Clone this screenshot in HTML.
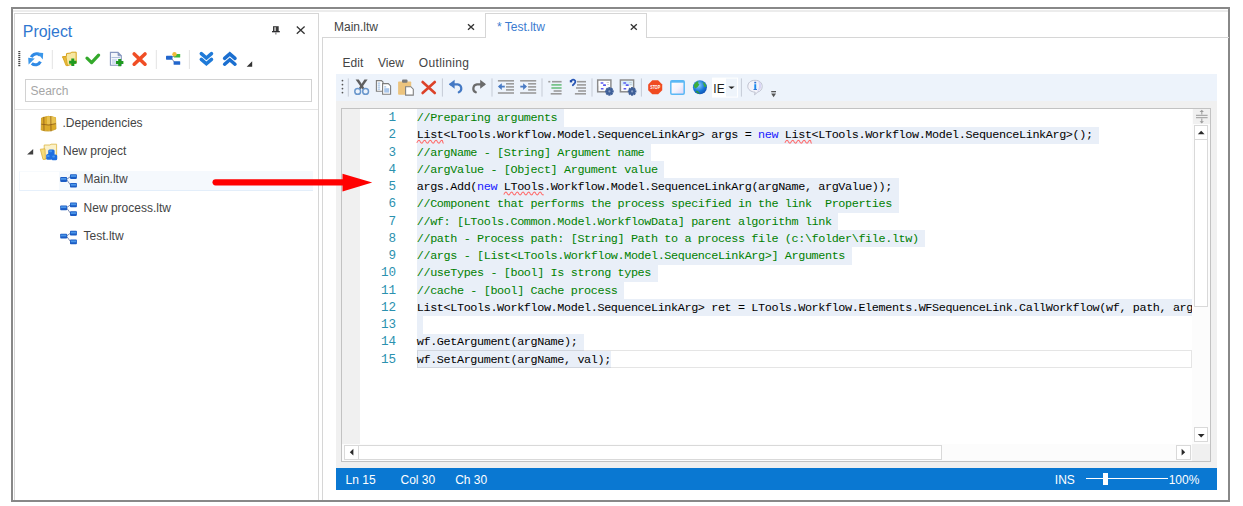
<!DOCTYPE html>
<html><head><meta charset="utf-8">
<style>
*{margin:0;padding:0;box-sizing:border-box}
html,body{width:1243px;height:506px;overflow:hidden;background:#fff;font-family:"Liberation Sans",sans-serif}
.a{position:absolute}
.t{position:absolute;white-space:pre;line-height:1}
svg{position:absolute;overflow:visible}
.code{position:absolute;left:0;top:0;font-family:"Liberation Mono",monospace;font-size:11.8px;line-height:17.25px;letter-spacing:-0.388px}
.ln{position:absolute;left:356px;width:40px;text-align:right;color:#2b91af;white-space:pre;font-size:12.6px;letter-spacing:0}
.cl{position:absolute;left:416.8px;white-space:pre;color:#000}
.cm{color:#008000}
.kw{color:#1a1aff}
</style></head><body>
<div class="a" style="left:11px;top:7px;width:1219px;height:495px;background:transparent;border:2px solid #888888"></div>
<div class="a" style="left:13px;top:10px;width:1215px;height:2px;background:#ececec;"></div>
<div class="a" style="left:14px;top:13px;width:305px;height:487px;background:transparent;border:1px solid #d6d6d6;border-bottom:none"></div>
<div class="a" style="left:322px;top:37px;width:907px;height:463px;background:transparent;border-left:1px solid #d6d6d6;border-top:1px solid #d6d6d6"></div>
<div class="t" style="left:22.80px;top:23.84px;font-size:15.9px;color:#2f77d0;">Project</div>
<div class="a" style="left:25px;top:79px;width:287px;height:23px;background:#fff;border:1px solid #d2d2d2"></div>
<div class="t" style="left:30.50px;top:85.14px;font-size:12px;color:#a6a6a6;">Search</div>
<div class="a" style="left:15px;top:109px;width:303px;height:1px;background:#e6e6e6;"></div>
<div class="a" style="left:19px;top:171px;width:294px;height:20px;background:transparent;border-left:1px solid #f1f6fc;border-bottom:1px solid #e6f0fb;border-top:1px solid #f7fafd"></div>
<div class="a" style="left:59px;top:171px;width:254px;height:20px;background:#f5f9fd;border-bottom:1px solid #e3eefa"></div>
<div class="t" style="left:62.50px;top:117.14px;font-size:12px;color:#444444;">.Dependencies</div>
<div class="t" style="left:63.00px;top:145.24px;font-size:12px;color:#444444;">New project</div>
<div class="t" style="left:83.60px;top:173.34px;font-size:12px;color:#444444;">Main.ltw</div>
<div class="t" style="left:83.60px;top:201.54px;font-size:12px;color:#444444;">New process.ltw</div>
<div class="t" style="left:83.60px;top:229.94px;font-size:12px;color:#444444;">Test.ltw</div>
<div class="a" style="left:485px;top:13px;width:162px;height:25px;background:#fff;border:1px solid #d6d6d6;border-bottom:none"></div>
<div class="t" style="left:334.00px;top:20.74px;font-size:12px;color:#444444;">Main.ltw</div>
<div class="t" style="left:497.00px;top:20.74px;font-size:12px;color:#3a7bd0;">* Test.ltw</div>
<div class="t" style="left:342.60px;top:56.74px;font-size:12px;color:#444444;">Edit</div>
<div class="t" style="left:378.00px;top:56.74px;font-size:12px;color:#444444;">View</div>
<div class="t" style="left:418.80px;top:56.74px;font-size:12px;color:#444444;letter-spacing:0.35px">Outlining</div>
<div class="a" style="left:336px;top:74px;width:881px;height:28px;background:#edf3fb;"></div>
<div class="a" style="left:336px;top:101px;width:881px;height:367px;background:#f0f0f0;"></div>
<div class="a" style="left:341px;top:108px;width:870px;height:354px;background:#fff;border:1px solid #c2c2c2"></div>
<div class="a" style="left:342px;top:109px;width:18px;height:335px;background:#f0f0f0;"></div>
<div class="a" style="left:342px;top:109px;width:850px;height:335px;overflow:hidden">
<div class="code" style="left:-342px;top:-109px">
<div class="a" style="left:416.8px;top:109.40px;width:147.25px;height:17.25px;background:#e9eff8"></div>
<div class="a" style="left:416.8px;top:126.65px;width:682.69px;height:17.25px;background:#e9eff8"></div>
<div class="a" style="left:416.8px;top:143.90px;width:234.25px;height:17.25px;background:#e9eff8"></div>
<div class="a" style="left:416.8px;top:161.15px;width:247.64px;height:17.25px;background:#e9eff8"></div>
<div class="a" style="left:416.8px;top:178.40px;width:481.90px;height:17.25px;background:#e9eff8"></div>
<div class="a" style="left:416.8px;top:195.65px;width:481.90px;height:17.25px;background:#e9eff8"></div>
<div class="a" style="left:416.8px;top:212.90px;width:421.66px;height:17.25px;background:#e9eff8"></div>
<div class="a" style="left:416.8px;top:230.15px;width:508.67px;height:17.25px;background:#e9eff8"></div>
<div class="a" style="left:416.8px;top:247.40px;width:435.04px;height:17.25px;background:#e9eff8"></div>
<div class="a" style="left:416.8px;top:264.65px;width:240.95px;height:17.25px;background:#e9eff8"></div>
<div class="a" style="left:416.8px;top:281.90px;width:207.48px;height:17.25px;background:#e9eff8"></div>
<div class="a" style="left:416.8px;top:299.15px;width:803.16px;height:17.25px;background:#e9eff8"></div>
<div class="a" style="left:416.8px;top:316.40px;width:6.69px;height:17.25px;background:#e9eff8"></div>
<div class="a" style="left:416.8px;top:333.65px;width:167.32px;height:17.25px;background:#e9eff8"></div>
<div class="a" style="left:416.8px;top:350.90px;width:194.10px;height:17.25px;background:#e9eff8"></div>
<div class="a" style="left:416.8px;top:350.40px;width:775.20px;height:17.25px;border:1px solid rgba(0,0,0,0.1)"></div>
<div class="ln" style="top:110.20px">1</div>
<div class="cl" style="top:110.20px"><span class="cm">//Preparing arguments</span></div>
<div class="ln" style="top:127.45px">2</div>
<div class="cl" style="top:127.45px">List&lt;LTools.Workflow.Model.SequenceLinkArg&gt; args = <span class="kw">new</span> List&lt;LTools.Workflow.Model.SequenceLinkArg&gt;();</div>
<div class="ln" style="top:144.70px">3</div>
<div class="cl" style="top:144.70px"><span class="cm">//argName - [String] Argument name</span></div>
<div class="ln" style="top:161.95px">4</div>
<div class="cl" style="top:161.95px"><span class="cm">//argValue - [Object] Argument value</span></div>
<div class="ln" style="top:179.20px">5</div>
<div class="cl" style="top:179.20px">args.Add(<span class="kw">new</span> LTools.Workflow.Model.SequenceLinkArg(argName, argValue));</div>
<div class="ln" style="top:196.45px">6</div>
<div class="cl" style="top:196.45px"><span class="cm">//Component that performs the process specified in the link  Properties</span></div>
<div class="ln" style="top:213.70px">7</div>
<div class="cl" style="top:213.70px"><span class="cm">//wf: [LTools.Common.Model.WorkflowData] parent algorithm link</span></div>
<div class="ln" style="top:230.95px">8</div>
<div class="cl" style="top:230.95px"><span class="cm">//path - Process path: [String] Path to a process file (c:\folder\file.ltw)</span></div>
<div class="ln" style="top:248.20px">9</div>
<div class="cl" style="top:248.20px"><span class="cm">//args - [List&lt;LTools.Workflow.Model.SequenceLinkArg&gt;] Arguments</span></div>
<div class="ln" style="top:265.45px">10</div>
<div class="cl" style="top:265.45px"><span class="cm">//useTypes - [bool] Is strong types</span></div>
<div class="ln" style="top:282.70px">11</div>
<div class="cl" style="top:282.70px"><span class="cm">//cache - [bool] Cache process</span></div>
<div class="ln" style="top:299.95px">12</div>
<div class="cl" style="top:299.95px">List&lt;LTools.Workflow.Model.SequenceLinkArg&gt; ret = LTools.Workflow.Elements.WFSequenceLink.CallWorkflow(wf, path, args);</div>
<div class="ln" style="top:317.20px">13</div>
<div class="cl" style="top:317.20px"></div>
<div class="ln" style="top:334.45px">14</div>
<div class="cl" style="top:334.45px">wf.GetArgument(argName);</div>
<div class="ln" style="top:351.70px">15</div>
<div class="cl" style="top:351.70px">wf.SetArgument(argName, val);</div>
<svg style="left:0;top:0" width="1243" height="506"><path d="M416.80,142.85 Q418.23,139.65 419.65,140.65 Q421.08,143.85 422.50,142.85 Q423.93,139.65 425.35,140.65 Q426.78,143.85 428.20,142.85 Q429.63,139.65 431.05,140.65 Q432.48,143.85 433.90,142.85 Q435.33,139.65 436.75,140.65 Q438.18,143.85 439.60,142.85 Q441.03,139.65 442.45,140.65 Q443.01,143.85 443.57,142.85" fill="none" stroke="#ff6a6a" stroke-width="1.05"/><path d="M784.91,142.85 Q786.34,139.65 787.76,140.65 Q789.19,143.85 790.62,142.85 Q792.04,139.65 793.47,140.65 Q794.89,143.85 796.32,142.85 Q797.74,139.65 799.17,140.65 Q800.59,143.85 802.02,142.85 Q803.44,139.65 804.87,140.65 Q806.29,143.85 807.72,142.85 Q809.14,139.65 810.57,140.65 Q811.13,143.85 811.69,142.85" fill="none" stroke="#ff6a6a" stroke-width="1.05"/><path d="M503.81,194.60 Q505.23,191.40 506.66,192.40 Q508.08,195.60 509.51,194.60 Q510.93,191.40 512.36,192.40 Q513.78,195.60 515.21,194.60 Q516.63,191.40 518.06,192.40 Q519.48,195.60 520.91,194.60 Q522.33,191.40 523.76,192.40 Q525.18,195.60 526.61,194.60 Q528.03,191.40 529.46,192.40 Q530.88,195.60 532.31,194.60 Q533.73,191.40 535.16,192.40 Q536.58,195.60 538.01,194.60 Q539.43,191.40 540.86,192.40 Q542.28,195.60 543.71,194.60" fill="none" stroke="#ff6a6a" stroke-width="1.05"/></svg>
</div></div>
<div class="a" style="left:1192px;top:109px;width:18px;height:335px;background:#fcfcfc;"></div>
<div class="a" style="left:1193px;top:109px;width:17px;height:15px;background:#f0f0f0;"></div>
<div class="a" style="left:1194px;top:125px;width:14px;height:14.5px;background:#fff;border:1px solid #d9d9d9"></div>
<div class="a" style="left:1194px;top:139px;width:14px;height:168px;background:#fff;border:1px solid #d9d9d9"></div>
<div class="a" style="left:1194px;top:427px;width:14px;height:15px;background:#fff;border:1px solid #d9d9d9"></div>
<div class="a" style="left:342px;top:444px;width:850px;height:17px;background:#fcfcfc;"></div>
<div class="a" style="left:344px;top:445px;width:14.5px;height:14.5px;background:#fff;border:1px solid #d9d9d9"></div>
<div class="a" style="left:358px;top:445px;width:584px;height:14.5px;background:#fff;border:1px solid #d9d9d9"></div>
<div class="a" style="left:1176px;top:445px;width:15.2px;height:14.5px;background:#fff;border:1px solid #d9d9d9"></div>
<div class="a" style="left:1192px;top:444px;width:18px;height:17px;background:#f0f0f0;"></div>
<svg style="left:0;top:0" width="1243" height="506"><polygon points="1197.8,134.2 1204.6,134.2 1201.2,130.8" fill="#2a2a2a"/><polygon points="1197.8,434 1204.6,434 1201.2,437.4" fill="#2a2a2a"/><polygon points="353.4,448.8 353.4,455.6 349.8,452.2" fill="#2a2a2a"/><polygon points="1181.6,448.8 1181.6,455.6 1185.2,452.2" fill="#2a2a2a"/><g fill="#9a9a9a"><rect x="1196" y="114.8" width="11.6" height="1"/><rect x="1196" y="117.2" width="11.6" height="1"/><rect x="1201.3" y="111" width="1" height="3.5"/><rect x="1201.3" y="118.5" width="1" height="3.5"/><polygon points="1199.6,112 1203.9,112 1201.8,109.8"/><polygon points="1199.6,121.2 1203.9,121.2 1201.8,123.4"/></g></svg>
<div class="a" style="left:336px;top:468px;width:881px;height:22px;background:#0a78d2;"></div>
<div class="t" style="left:345.60px;top:474.14px;font-size:12px;color:#fff;">Ln 15</div>
<div class="t" style="left:400.50px;top:474.14px;font-size:12px;color:#fff;">Col 30</div>
<div class="t" style="left:455.20px;top:474.14px;font-size:12px;color:#fff;">Ch 30</div>
<div class="t" style="left:1054.80px;top:474.14px;font-size:12px;color:#fff;">INS</div>
<div class="t" style="left:1168.70px;top:474.14px;font-size:12px;color:#fff;">100%</div>
<div class="a" style="left:1086px;top:478px;width:82px;height:1px;background:#fff;"></div>
<div class="a" style="left:1103px;top:473px;width:5px;height:12px;background:#fff;"></div>
<svg style="left:0;top:0" width="1243" height="506"><g fill="#2d2d30"><rect x="273" y="26.2" width="5.7" height="5" fill="#3a3a3a"/><rect x="274.2" y="27.2" width="1.8" height="4" fill="#b8b8b8"/><rect x="272" y="31" width="7.8" height="1.3"/><rect x="275.2" y="32.3" width="1.3" height="2.2" fill="#888"/></g><path d="M296.8,26.5 L304.6,33.8 M304.6,26.5 L296.8,33.8" stroke="#333" stroke-width="1.3"/><g fill="#444"><rect x="18.3" y="51.0" width="2" height="1.2"/><rect x="18.3" y="53.0" width="2" height="1.2"/><rect x="18.3" y="55.0" width="2" height="1.2"/><rect x="18.3" y="57.0" width="2" height="1.2"/><rect x="18.3" y="59.0" width="2" height="1.2"/><rect x="18.3" y="61.0" width="2" height="1.2"/><rect x="18.3" y="63.0" width="2" height="1.2"/><rect x="18.3" y="65.0" width="2" height="1.2"/></g><g fill="none" stroke="#2f8ae6" stroke-width="3"><path d="M31.4,57.2 A5.4,5.4 0 0 1 40.2,55.4"/><path d="M40.4,61.6 A5.4,5.4 0 0 1 31.8,63.4"/></g><polygon points="37,52.6 43.2,53 42.8,59.6" fill="#3b97ea"/><polygon points="28.2,57.8 34.8,58.4 28.6,64.6" fill="#3b97ea"/><rect x="51.8" y="50" width="1" height="19" fill="#e3e3e3"/><rect x="155.8" y="50" width="1" height="19" fill="#e3e3e3"/><rect x="188.9" y="50" width="1" height="19" fill="#e3e3e3"/><path d="M62.6,56.8 L66.3,56.5 L66.6,53.5 L71,53 L71.5,52.2 L76.2,52.2 L76.2,63 L67.5,65.6 Z" fill="#f7e7a0" stroke="#d6a21c" stroke-width="1"/><path d="M62.6,56.8 L66,56.6 L67.5,65.6 L66,65.6 Z" fill="#e8b93a" stroke="#d6a21c" stroke-width="0.8"/><path d="M72.8,58.6 V66 M69.1,62.3 H76.5" stroke="#1f9a1f" stroke-width="3"/><path d="M87,58.2 L91.6,62.6 L98.6,55.2" fill="none" stroke="#33a92b" stroke-width="3.2" stroke-linecap="round" stroke-linejoin="round"/><path d="M110.4,52.4 H118 L121.3,55.7 V65.3 H110.4 Z" fill="#f3f6fb" stroke="#8797bf" stroke-width="1.1"/><path d="M118,52.4 V55.7 H121.3" fill="#8797bf" stroke="#8797bf" stroke-width="0.8"/><rect x="111.5" y="57" width="8.5" height="0.8" fill="#9fb3d6"/><rect x="112" y="59" width="5" height="5" fill="#d3def0"/><path d="M119.7,58.9 V66.3 M116,62.6 H123.4" stroke="#1f9a1f" stroke-width="3"/><path d="M134.2,54 L145,64.2 M145,54 L134.2,64.2" stroke="#f04e25" stroke-width="3.6" stroke-linecap="round"/><line x1="171" y1="57.7" x2="175" y2="55.6" stroke="#7a8ab0" stroke-width="1"/><line x1="171" y1="57.7" x2="175" y2="63" stroke="#7a8ab0" stroke-width="1"/><rect x="166" y="55.7" width="6.4" height="4" rx="0.6" fill="#2266cc"/><rect x="173.8" y="54" width="6.4" height="3.6" rx="0.6" fill="#3cb83c"/><rect x="173.6" y="61.2" width="6.6" height="3.6" rx="0.6" fill="#2266cc"/><circle cx="174.5" cy="54.3" r="2.2" fill="#f0b93a"/><path d="M201.3,53.6 L206.4,58 L211.5,53.6 M201.3,59.4 L206.4,63.8 L211.5,59.4" fill="none" stroke="#1f7ad8" stroke-width="3.5" stroke-linecap="round" stroke-linejoin="miter"/><path d="M224.6,58.4 L229.8,53.9 L235,58.4 M224.6,64.2 L229.8,59.7 L235,64.2" fill="none" stroke="#1b6fd0" stroke-width="3.5" stroke-linecap="round" stroke-linejoin="miter"/><polygon points="252.2,61.2 252.2,66.7 246.7,66.7" fill="#333"/><path d="M41.5,118 Q48,114.8 55.5,117.6 L56,129 Q49,132.6 41.2,130 Z" fill="#dcab2a" stroke="#c99a1e" stroke-width="0.8"/><path d="M47,116.2 Q51.5,116 55.5,117.6 L55.8,123.5 Q51,124.8 47,124.4Z" fill="#e9c24e"/><path d="M43.8,116.8 L44,130.8 M41.3,124.2 Q49,126.2 55.9,123.6 M50.8,116.2 L51,131.4" stroke="#8a5a18" stroke-width="1" fill="none" opacity="0.75"/><polygon points="33.2,148.9 33.2,154.6 27.1,154.6" fill="#404040"/><path d="M44.2,145 L50,145 L51,144.2 L56.6,144.2 L56.6,158.6 L44.2,158.6 Z" fill="#fbf1c8" stroke="#e0bd55" stroke-width="0.9"/><path d="M40.3,149.2 L45,148.8 L45.4,159.4 L43,159.4 Z" fill="#f6dc78" stroke="#dcb040" stroke-width="0.8"/><g fill="#1f6fe0"><rect x="48.2" y="149.6" width="6.4" height="5.8" rx="1.5"/><rect x="46.2" y="154" width="5.8" height="5.8" rx="1.5"/><rect x="51.4" y="154.6" width="5.8" height="5.6" rx="1.5"/></g><g fill="#4fa0f5" opacity="0.8"><rect x="49" y="150.3" width="3" height="2" rx="0.8"/><rect x="47" y="155" width="2.6" height="2" rx="0.8"/><rect x="52.3" y="155.5" width="2.6" height="2" rx="0.8"/></g><g><line x1="66.5" y1="179.5" x2="70.5" y2="176.5" stroke="#7080a8" stroke-width="0.9"/><line x1="66.5" y1="179.5" x2="70.5" y2="185" stroke="#7080a8" stroke-width="0.9"/><rect x="60.2" y="177.1" width="6.9" height="4.8" rx="0.8" fill="#1b5cc4"/><rect x="70" y="174.2" width="6.9" height="4.7" rx="0.8" fill="#1b5cc4"/><rect x="70" y="183" width="6.9" height="4.6" rx="0.8" fill="#1b5cc4"/><rect x="61" y="178" width="5.3" height="1.8" fill="#4a95e8"/><rect x="70.8" y="175.1" width="5.3" height="1.8" fill="#4a95e8"/><rect x="70.8" y="183.9" width="5.3" height="1.8" fill="#4a95e8"/></g><g><line x1="66.5" y1="207.8" x2="70.5" y2="204.8" stroke="#7080a8" stroke-width="0.9"/><line x1="66.5" y1="207.8" x2="70.5" y2="213.3" stroke="#7080a8" stroke-width="0.9"/><rect x="60.2" y="205.4" width="6.9" height="4.8" rx="0.8" fill="#1b5cc4"/><rect x="70" y="202.5" width="6.9" height="4.7" rx="0.8" fill="#1b5cc4"/><rect x="70" y="211.3" width="6.9" height="4.6" rx="0.8" fill="#1b5cc4"/><rect x="61" y="206.3" width="5.3" height="1.8" fill="#4a95e8"/><rect x="70.8" y="203.4" width="5.3" height="1.8" fill="#4a95e8"/><rect x="70.8" y="212.20000000000002" width="5.3" height="1.8" fill="#4a95e8"/></g><g><line x1="66.5" y1="236.1" x2="70.5" y2="233.1" stroke="#7080a8" stroke-width="0.9"/><line x1="66.5" y1="236.1" x2="70.5" y2="241.6" stroke="#7080a8" stroke-width="0.9"/><rect x="60.2" y="233.7" width="6.9" height="4.8" rx="0.8" fill="#1b5cc4"/><rect x="70" y="230.79999999999998" width="6.9" height="4.7" rx="0.8" fill="#1b5cc4"/><rect x="70" y="239.6" width="6.9" height="4.6" rx="0.8" fill="#1b5cc4"/><rect x="61" y="234.6" width="5.3" height="1.8" fill="#4a95e8"/><rect x="70.8" y="231.7" width="5.3" height="1.8" fill="#4a95e8"/><rect x="70.8" y="240.5" width="5.3" height="1.8" fill="#4a95e8"/></g><path d="M468.0,24.3 L474.0,29.7 M474.0,24.3 L468.0,29.7" stroke="#333" stroke-width="1.35"/><path d="M630.8000000000001,24.3 L636.8000000000001,29.7 M636.8000000000001,24.3 L630.8000000000001,29.7" stroke="#333" stroke-width="1.35"/><g fill="#555"><rect x="341.6" y="79.8" width="1.7" height="1.7" rx="0.8"/><rect x="341.6" y="83.8" width="1.7" height="1.7" rx="0.8"/><rect x="341.6" y="87.8" width="1.7" height="1.7" rx="0.8"/><rect x="341.6" y="91.8" width="1.7" height="1.7" rx="0.8"/></g><rect x="347.8" y="78.4" width="1" height="18.2" fill="#c5cbd6"/><rect x="441.9" y="78.4" width="1" height="18.2" fill="#c5cbd6"/><rect x="491.5" y="78.4" width="1" height="18.2" fill="#c5cbd6"/><rect x="541.5" y="78.4" width="1" height="18.2" fill="#c5cbd6"/><rect x="591.5" y="78.4" width="1" height="18.2" fill="#c5cbd6"/><rect x="640.9" y="78.4" width="1" height="18.2" fill="#c5cbd6"/><rect x="740.9" y="78.4" width="1" height="18.2" fill="#c5cbd6"/><polygon points="355.6,79.6 358.8,79.4 364.6,88.6 362.6,89.6" fill="#5f5f5f"/><polygon points="367.6,79.6 364.4,79.4 358.6,88.6 360.6,89.6" fill="#5f5f5f"/><circle cx="357.7" cy="91.4" r="2.9" fill="none" stroke="#6a97cc" stroke-width="1.5"/><circle cx="365.6" cy="91.4" r="2.9" fill="none" stroke="#6a97cc" stroke-width="1.5"/><path d="M376.4,80.6 H381.5 L383,82 V91.2 H376.4 Z" fill="#fff" stroke="#7d7d7d" stroke-width="1.1"/><g fill="#8cb4e0"><rect x="377.6" y="82.6" width="2.6" height="1"/><rect x="377.6" y="84.6" width="2.6" height="1"/><rect x="377.6" y="86.6" width="2.6" height="1"/><rect x="377.6" y="88.6" width="2.6" height="1"/></g><path d="M382.6,83.6 H388.3 L390.6,85.9 V94.2 H382.6 Z" fill="#fff" stroke="#7d7d7d" stroke-width="1.1"/><rect x="384.2" y="86.4" width="2" height="1" fill="#8cb4e0"/><rect x="384.2" y="88.2" width="5" height="4.4" fill="#a9c6ea"/><rect x="398.1" y="81.4" width="13.1" height="13.3" rx="0.8" fill="#ecc47e"/><rect x="402" y="79.4" width="5.5" height="3.4" rx="1" fill="#7a7a7a"/><path d="M405.6,86.7 H410.8 L413.3,89.2 V95.1 H405.6 Z" fill="#fff" stroke="#808080" stroke-width="1.1"/><path d="M422.6,82 L434.8,93 M434.8,82 L422.6,93" stroke="#dc4128" stroke-width="2.6" stroke-linecap="round"/><path d="M450.5,84.3 H457.7 A4.2,4.2 0 0 1 458.8,92.3" fill="none" stroke="#4479c4" stroke-width="2.2" stroke-linecap="round"/><polygon points="448.8,84.3 454.6,79.8 454.6,88.8" fill="#4479c4"/><path d="M484,84.3 H477 A4.2,4.2 0 0 0 475.8,92.3" fill="none" stroke="#6b6b6b" stroke-width="2.2" stroke-linecap="round"/><polygon points="486,84.3 480.2,79.8 480.2,88.8" fill="#6b6b6b"/><g fill="#9b9b9b"><rect x="497.9" y="80" width="16.1" height="1.6"/><rect x="506" y="83" width="8" height="1.6"/><rect x="506" y="86.1" width="8" height="1.6"/><rect x="506" y="89.1" width="8" height="1.6"/><rect x="497.9" y="92.2" width="16.1" height="1.6"/></g><path d="M499,86.6 H504.8" stroke="#4a7bc4" stroke-width="1.8"/><polygon points="497.9,86.6 501.8,83.2 501.8,90" fill="#4a7bc4"/><g fill="#9b9b9b"><rect x="520.1" y="80" width="16.1" height="1.6"/><rect x="528.1" y="83" width="8" height="1.6"/><rect x="528.1" y="86.1" width="8" height="1.6"/><rect x="528.1" y="89.1" width="8" height="1.6"/><rect x="520.1" y="92.2" width="16.1" height="1.6"/></g><path d="M520.3,86.6 H525.5" stroke="#4a7bc4" stroke-width="1.8"/><polygon points="527,86.6 523.1,83.2 523.1,90" fill="#4a7bc4"/><g fill="#9b9b9b"><rect x="548.3" y="80.9" width="2" height="1.6"/><rect x="552" y="80.9" width="9.6" height="1.6"/><rect x="553.6" y="90.2" width="8" height="1.6"/><rect x="550.7" y="93" width="10.9" height="1.6"/></g><g fill="#6cbf7f"><rect x="551.4" y="84.1" width="10.2" height="1.6"/><rect x="551.4" y="87.2" width="10.2" height="1.6"/></g><g fill="#9b9b9b"><rect x="577" y="80.9" width="9" height="1.6"/><rect x="577" y="84.1" width="9" height="1.6"/><rect x="576" y="87.2" width="10" height="1.6"/><rect x="578.1" y="90.2" width="7.9" height="1.6"/><rect x="574.9" y="93" width="11.1" height="1.6"/></g><path d="M571,81 Q573,78.6 575,80.6 Q576.3,82.5 572.8,85.2" fill="none" stroke="#2957b5" stroke-width="1.8" stroke-linecap="round"/><rect x="569.8" y="80.2" width="2.4" height="2.2" fill="#1f4aa8"/><rect x="597.7" y="80" width="13.2" height="11.8" fill="#fbfbfb" stroke="#8c8c8c" stroke-width="1.5"/><rect x="598.8" y="81.2" width="11" height="4.5" fill="#fff"/><g fill="#5a5af0"><rect x="600.5" y="82.2" width="3" height="1.5" rx="0.6"/><rect x="603" y="84.2" width="3" height="1.8" rx="0.6"/><rect x="600.8" y="88" width="2.8" height="1.5" rx="0.6"/></g><g fill="#c8c8c8"><rect x="606.5" y="82.2" width="2.5" height="0.8"/><rect x="607" y="84" width="2" height="0.8"/></g><g fill="#3e5f98"><rect x="608.3" y="87.10000000000001" width="2.2" height="8.6" transform="rotate(0 609.4 91.4)"/><rect x="608.3" y="87.10000000000001" width="2.2" height="8.6" transform="rotate(45 609.4 91.4)"/><rect x="608.3" y="87.10000000000001" width="2.2" height="8.6" transform="rotate(90 609.4 91.4)"/><rect x="608.3" y="87.10000000000001" width="2.2" height="8.6" transform="rotate(135 609.4 91.4)"/><circle cx="609.4" cy="91.4" r="3.2"/></g><circle cx="609.4" cy="91.4" r="1.1" fill="#8aa0c8"/><rect x="620.4000000000001" y="80" width="13.2" height="11.8" fill="#fbfbfb" stroke="#8c8c8c" stroke-width="1.5"/><rect x="621.5" y="81.2" width="11" height="4.5" fill="#d3ecfb"/><g fill="#5a5af0"><rect x="623.2" y="82.2" width="3" height="1.5" rx="0.6"/><rect x="625.7" y="84.2" width="3" height="1.8" rx="0.6"/><rect x="623.5" y="88" width="2.8" height="1.5" rx="0.6"/></g><g fill="#c8c8c8"><rect x="629.2" y="82.2" width="2.5" height="0.8"/><rect x="629.7" y="84" width="2" height="0.8"/></g><g fill="#3e5f98"><rect x="631.0" y="87.10000000000001" width="2.2" height="8.6" transform="rotate(0 632.1 91.4)"/><rect x="631.0" y="87.10000000000001" width="2.2" height="8.6" transform="rotate(45 632.1 91.4)"/><rect x="631.0" y="87.10000000000001" width="2.2" height="8.6" transform="rotate(90 632.1 91.4)"/><rect x="631.0" y="87.10000000000001" width="2.2" height="8.6" transform="rotate(135 632.1 91.4)"/><circle cx="632.1" cy="91.4" r="3.2"/></g><circle cx="632.1" cy="91.4" r="1.1" fill="#8aa0c8"/><polygon points="662.22,90.21 658.11,94.32 652.29,94.32 648.18,90.21 648.18,84.39 652.29,80.28 658.11,80.28 662.22,84.39" fill="#f04b22"/><text x="655.2" y="89.4" font-family="Liberation Sans" font-weight="bold" font-size="5" fill="#fff" text-anchor="middle" textLength="10" lengthAdjust="spacingAndGlyphs">STOP</text><defs><linearGradient id="wg" x1="0" y1="0" x2="1" y2="1"><stop offset="0" stop-color="#fff"/><stop offset="0.55" stop-color="#f4f3fc"/><stop offset="1" stop-color="#d9d2f6"/></linearGradient><radialGradient id="gg" cx="0.4" cy="0.35" r="0.7"><stop offset="0" stop-color="#8fd0ff"/><stop offset="0.6" stop-color="#1a78d8"/><stop offset="1" stop-color="#0d4fb0"/></radialGradient></defs><rect x="670.8" y="80.8" width="13.4" height="13.4" rx="1.2" fill="url(#wg)" stroke="#5ab8f5" stroke-width="1.5"/><rect x="670.8" y="80.8" width="13.4" height="1.9" fill="#5ab8f5"/><circle cx="699.9" cy="87.3" r="7" fill="url(#gg)"/><path d="M694,84.5 Q695.5,81.5 698.5,81 Q697.5,83.5 699.5,84.5 Q698,87 695.5,88.5 Q693.5,87.5 694,84.5Z" fill="#3cae3c"/><path d="M702.5,81.8 Q705.5,83 706.4,86 Q705,88 704.2,86.5 Q703.5,84 702.5,81.8Z" fill="#3cae3c"/><path d="M697,90.5 Q699.5,92 700,94 Q697,93.6 695.5,91.6Z" fill="#2f9a3a"/><rect x="712" y="77.6" width="26" height="20" fill="#fff"/><rect x="726" y="78.6" width="11" height="18" fill="#eef4fb"/><polygon points="728.4,86.4 734.6,86.4 731.5,89" fill="#222"/><path d="M755,80.3 C759.8,80.3 762.2,83.2 762.2,86.4 C762.2,89.4 760.2,91.5 757.8,92 L754.5,94.8 L755.2,92.2 C750.8,91.8 747.8,89.6 747.8,86.3 C747.8,82.9 750.6,80.3 755,80.3Z" fill="#f4f4fa" stroke="#b9bccc" stroke-width="0.9"/><path d="M758,81.2 C761,82.2 761.8,85 761.2,87.6 C760.3,90 758.5,91 757,91.4 C759.5,88.5 759.5,84.5 758,81.2Z" fill="#d9d6f5"/><rect x="754.3" y="81.8" width="1.9" height="1.6" fill="#2a6cd0"/><rect x="754.3" y="84.2" width="1.9" height="5.3" fill="#1a8af0"/><rect x="753.5" y="89" width="3.5" height="0.9" fill="#2a6cd0"/><rect x="771.2" y="91" width="4.8" height="1.3" fill="#555"/><polygon points="771.2,93.6 776,93.6 773.6,97.2" fill="#555"/></svg>
<div class="t" style="left:713.30px;top:82.74px;font-size:12px;color:#1e1e1e;">IE</div>
<svg style="left:0;top:0" width="1243" height="506"><line x1="215.6" y1="182.3" x2="345" y2="182.3" stroke="#f00" stroke-width="6.2" stroke-linecap="round"/><polygon points="342.5,173.7 372.2,182.4 342.5,191.6" fill="#f00"/></svg>
</body></html>
